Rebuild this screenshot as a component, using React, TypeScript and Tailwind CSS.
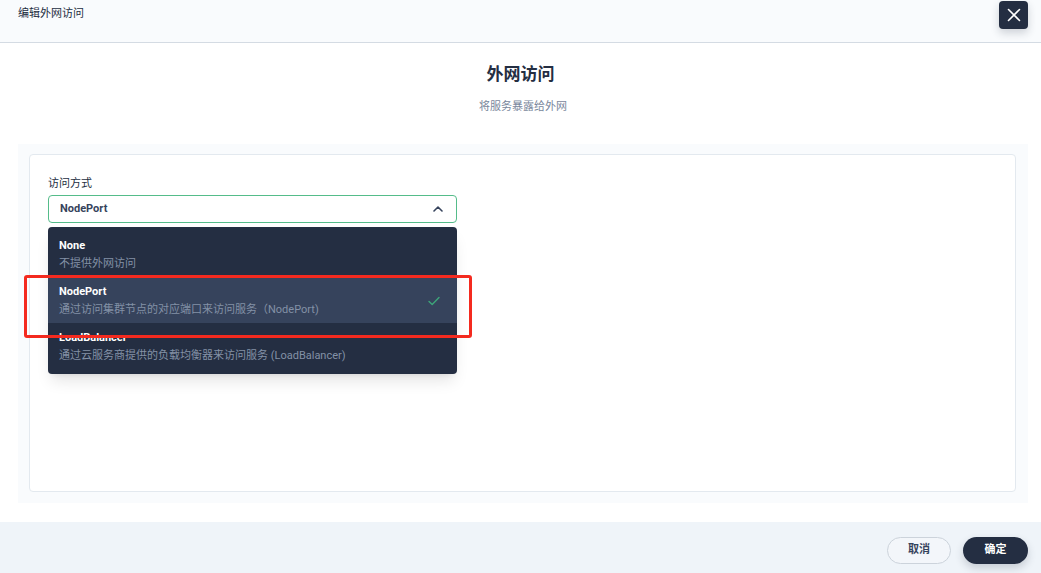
import { FC } from 'react'

const font = { fontFamily: 'Roboto, "Noto Sans CJK SC", sans-serif' }

type Option = { title: string; desc: string; active?: boolean }

const options: Option[] = [
  { title: 'None', desc: '不提供外网访问' },
  { title: 'NodePort', desc: '通过访问集群节点的对应端口来访问服务（NodePort)', active: true },
  { title: 'LoadBalancer', desc: '通过云服务商提供的负载均衡器来访问服务 (LoadBalancer)' },
]

const CloseIcon = () => (
  <svg width="14" height="14" viewBox="0 0 14 14" fill="none">
    <path d="M1.5 1.5l11 11M12.5 1.5l-11 11" stroke="white" strokeWidth="1.6" strokeLinecap="round" />
  </svg>
)

const ChevronUp = () => (
  <svg width="10" height="6" viewBox="0 0 10 6" fill="none">
    <path d="M1 5l4-4 4 4" stroke="#36435c" strokeWidth="1.6" strokeLinecap="round" strokeLinejoin="round" />
  </svg>
)

const Check = () => (
  <svg width="12" height="10" viewBox="0 0 12 10" fill="none">
    <path d="M1 5.5l3.2 3L11 1.5" stroke="#3da57a" strokeWidth="1.4" strokeLinecap="round" strokeLinejoin="round" />
  </svg>
)

const Dropdown: FC = () => (
  <div className="absolute left-0 top-[32px] z-10 w-[409px] rounded-[4px] bg-[#242e42] pb-[5px] pt-[4px] shadow-lg">
    {options.map((o) => (
      <div
        key={o.title}
        className={`flex items-center justify-between px-[11px] pb-[4px] pt-[6px] ${o.active ? 'bg-[#36435c]' : ''}`}
      >
        <div>
          <div className="text-[11px] font-bold leading-[18px] text-white">{o.title}</div>
          <div className="text-[11px] leading-[18px] text-[#8391a6]">{o.desc}</div>
        </div>
        {o.active && (
          <div className="mr-[6px]">
            <Check />
          </div>
        )}
      </div>
    ))}
  </div>
)

export default function App() {
  return (
    <div className="relative flex h-[573px] w-[1041px] flex-col overflow-hidden bg-white" style={font}>
      <div className="flex h-[43px] shrink-0 justify-between border-b border-[#d4dbe3] bg-[#f9fbfd] pl-[18px] pr-[13px]">
        <div className="pt-[4px] text-[11px] leading-[20px] text-[#242e42]">编辑外网访问</div>
        <button className="mt-[1px] flex h-[28px] w-[29px] items-center justify-center rounded-[4px] bg-[#242e42] shadow-[0_4px_8px_rgba(36,46,66,0.2)]">
          <CloseIcon />
        </button>
      </div>

      <div className="flex flex-1 flex-col">
        <div className="pt-[18px] text-center text-[17px] font-bold leading-[26px] text-[#242e42]">外网访问</div>
        <div className="mt-[11px] pl-[5px] text-center text-[11px] leading-[18px] text-[#79879c]">将服务暴露给外网</div>

        <div className="ml-[18px] mr-[13px] mt-[28px] bg-[#f9fbfd] pb-[11px] pl-[11px] pr-[12px] pt-[10px]">
          <div className="h-[338px] rounded-[4px] border border-[#e3e9ef] bg-white pl-[18px] pt-[19px]">
            <div className="text-[11px] leading-[20px] text-[#242e42]">访问方式</div>
            <div className="relative mt-[1px] w-[409px]">
              <div className="flex h-[28px] items-center justify-between rounded-[4px] border border-[#55bc8a] bg-white pl-[11px] pr-[13px]">
                <span className="text-[11px] font-bold text-[#36435c]">NodePort</span>
                <ChevronUp />
              </div>
              <Dropdown />
            </div>
          </div>
        </div>
      </div>

      <div className="flex h-[51px] shrink-0 justify-end gap-[12px] bg-[#eff4f9] pr-[13px] pt-[15px]">
        <button className="h-[27px] w-[64px] rounded-full border border-[#ccd3db] bg-[#f3f6fa] text-[11px] font-bold text-[#36435c]">
          取消
        </button>
        <button className="h-[27px] w-[65px] rounded-full bg-[#242e42] text-[11px] font-bold text-white shadow-[0_4px_8px_rgba(36,46,66,0.2)]">
          确定
        </button>
      </div>

      <div className="pointer-events-none absolute left-[24px] top-[275px] z-20 h-[63px] w-[448px] rounded-[3px] border-[3px] border-[#f42a1f]" />
    </div>
  )
}
